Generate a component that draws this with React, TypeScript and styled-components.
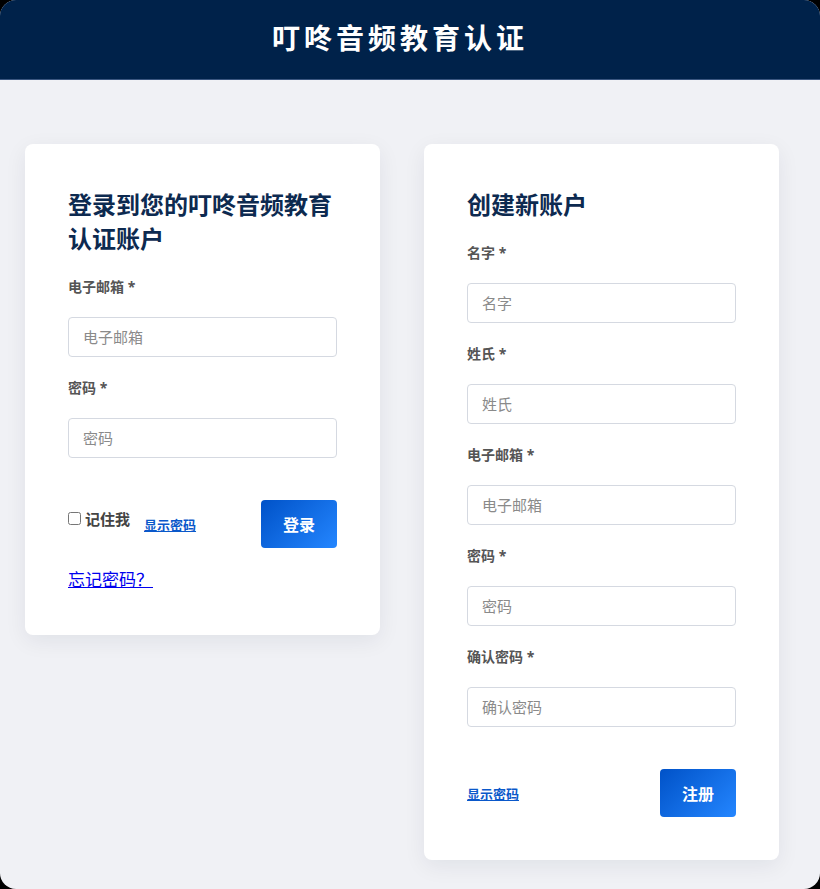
import React from "react";
import styled, { createGlobalStyle } from "styled-components";

const GlobalStyle = createGlobalStyle`
  html, body {
    margin: 0;
    padding: 0;
    background: #000;
  }
  * {
    box-sizing: border-box;
  }
`;

const FONT = `"Noto Sans", "Noto Sans CJK SC", sans-serif`;

const Page = styled.div`
  min-height: 889px;
  background: #f0f1f5;
  border-radius: 16px;
  overflow: hidden;
  font-family: ${FONT};
`;

const Header = styled.header`
  height: 80px;
  background: #00224a;
  border-bottom: 1px solid #3a5680;
  display: flex;
  align-items: center;
  justify-content: center;
`;

const SiteTitle = styled.h1`
  margin: 0 0 6px 0;
  padding-right: 20px;
  color: #fff;
  font-size: 28px;
  font-weight: 700;
  letter-spacing: 4px;
`;

const Main = styled.main`
  display: flex;
  align-items: flex-start;
  gap: 44px;
  padding: 64px 41px 28px 25px;
`;

const Card = styled.section`
  width: 355px;
  background: #fff;
  border-radius: 8px;
  box-shadow: 0 6px 22px rgba(20, 30, 60, 0.07);
  padding: 44px 43px 43px;
`;

const CardTitle = styled.h2`
  margin: 0 0 21px 0;
  font-size: 24px;
  line-height: 34px;
  font-weight: 700;
  color: #0d2a50;
`;

const Field = styled.div`
  display: flex;
  flex-direction: column;
  margin-bottom: 21px;
`;

const Label = styled.label`
  font-size: 14px;
  line-height: 20px;
  font-weight: 700;
  color: #555;
  margin-bottom: 20px;
`;

const Input = styled.input`
  height: 40px;
  width: 100%;
  border: 1px solid #d5d9e1;
  border-radius: 4px;
  padding: 0 14px;
  font-family: ${FONT};
  font-size: 15px;
  color: #333;
  outline: none;
  &::placeholder {
    color: #8a8a8a;
  }
`;

const Actions = styled.div`
  display: flex;
  align-items: center;
  margin-top: 42px;
`;

const Remember = styled.label`
  display: flex;
  align-items: center;
  gap: 4px;
  font-size: 15px;
  font-weight: 700;
  color: #444;
  margin-bottom: 12px;
`;

const Check = styled.input`
  margin: 0;
  width: 13px;
  height: 13px;
`;

const ShowLink = styled.a<{ $gap?: number }>`
  margin-left: ${(p) => p.$gap ?? 0}px;
  font-size: 13px;
  font-weight: 700;
  color: #0a58ca;
  text-decoration: underline;
  cursor: pointer;
`;

const Spacer = styled.div`
  flex: 1;
`;

const Button = styled.button`
  width: 76px;
  height: 48px;
  border: none;
  border-radius: 4px;
  background: linear-gradient(135deg, #0052c8 0%, #2486ff 100%);
  color: #fff;
  font-family: ${FONT};
  font-size: 16px;
  font-weight: 700;
  cursor: pointer;
`;

const Forgot = styled.a`
  display: inline-block;
  margin-top: 20px;
  font-size: 17px;
  line-height: 24px;
  color: #0000ee;
  text-decoration: underline;
`;

type TField = { label: string; type?: string };

const loginFields: TField[] = [
  { label: "电子邮箱", type: "email" },
  { label: "密码", type: "password" },
];

const signupFields: TField[] = [
  { label: "名字" },
  { label: "姓氏" },
  { label: "电子邮箱", type: "email" },
  { label: "密码", type: "password" },
  { label: "确认密码", type: "password" },
];

const FormField = ({ label, type }: TField) => (
  <Field>
    <Label>{label} *</Label>
    <Input type={type ?? "text"} placeholder={label} />
  </Field>
);

const App = (): JSX.Element => (
  <Page>
    <GlobalStyle />
    <Header>
      <SiteTitle>叮咚音频教育认证</SiteTitle>
    </Header>
    <Main>
      <Card>
        <CardTitle>登录到您的叮咚音频教育认证账户</CardTitle>
        {loginFields.map((f) => (
          <FormField key={f.label} {...f} />
        ))}
        <Actions>
          <Remember>
            <Check type="checkbox" />
            记住我
          </Remember>
          <ShowLink $gap={14}>显示密码</ShowLink>
          <Spacer />
          <Button>登录</Button>
        </Actions>
        <Forgot href="#">忘记密码？</Forgot>
      </Card>
      <Card>
        <CardTitle>创建新账户</CardTitle>
        {signupFields.map((f) => (
          <FormField key={f.label} {...f} />
        ))}
        <Actions>
          <ShowLink>显示密码</ShowLink>
          <Spacer />
          <Button>注册</Button>
        </Actions>
      </Card>
    </Main>
  </Page>
);

export default App;
